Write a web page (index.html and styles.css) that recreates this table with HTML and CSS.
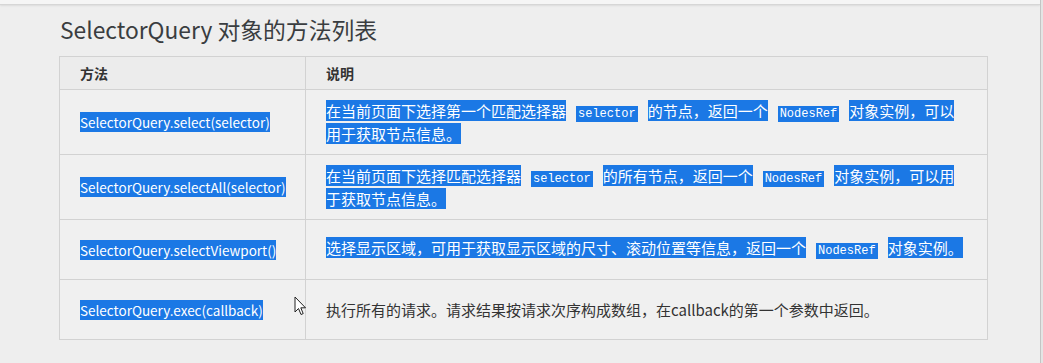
FILE: index.html
```
<!DOCTYPE html>
<html lang="zh-CN">
<head>
    <meta charset="UTF-8">
    <meta name="viewport" content="width=device-width, initial-scale=1.0">
    <title>SelectorQuery</title>
    <link rel="stylesheet" href="styles.css">
</head>
<body>

    <div class="window">
        <div class="content">
            <div class="topbar"></div>

            <div class="doc">
                <h2 class="title">SelectorQuery 对象的方法列表</h2>

                <table class="methods">
                    <thead>
                        <tr>
                            <th class="col-name">方法</th>
                            <th>说明</th>
                        </tr>
                    </thead>
                    <tbody>
                        <tr class="row-tall">
                            <td class="name"><span class="sel">SelectorQuery.select(selector)</span></td>
                            <td><span class="sel">在当前页面下选择第一个匹配选择器</span><code class="sel">selector</code><span class="sel">的节点，返回一个</span><code class="sel">NodesRef</code><span class="sel">对象实例，可以用于获取节点信息。</span></td>
                        </tr>
                        <tr class="row-tall">
                            <td class="name"><span class="sel">SelectorQuery.selectAll(selector)</span></td>
                            <td><span class="sel">在当前页面下选择匹配选择器</span><code class="sel">selector</code><span class="sel">的所有节点，返回一个</span><code class="sel">NodesRef</code><span class="sel">对象实例，可以用于获取节点信息。</span></td>
                        </tr>
                        <tr>
                            <td class="name"><span class="sel">SelectorQuery.selectViewport()</span></td>
                            <td><span class="sel">选择显示区域，可用于获取显示区域的尺寸、滚动位置等信息，返回一个</span><code class="sel">NodesRef</code><span class="sel">对象实例。</span></td>
                        </tr>
                        <tr>
                            <td class="name"><span class="sel">SelectorQuery.exec(callback)</span></td>
                            <td>执行所有的请求。请求结果按请求次序构成数组，在callback的第一个参数中返回。</td>
                        </tr>
                    </tbody>
                </table>
            </div>
        </div>
        <div class="scrollbar"></div>
    </div>

    <!-- mouse pointer -->
    <svg class="pointer" width="13" height="20" viewBox="0 0 13 20">
        <path d="M1 1 L1 16 L4.5 12.5 L7 18.5 L9.2 17.6 L6.8 11.8 L11.5 11.8 Z" fill="#fff" stroke="#222" stroke-width="1" stroke-linejoin="round"/>
    </svg>

</body>
</html>
```

FILE: styles.css
```
body {
    margin: 0;
    background-color: #eeeeee;
    font-family: "Noto Sans CJK SC", sans-serif;
    color: #333;
}

.window {
    display: flex;
    height: 363px;
}

.content {
    flex: 1;
}

.topbar {
    height: 4px;
    background-color: #f5f5f5;
    border-bottom: 1px solid #d6d6d6;
    box-shadow: 0 1px 2px rgba(0,0,0,0.08);
}

.scrollbar {
    width: 2px;
    border-left: 1px solid #c4c4c4;
    background-color: #e4e4e4;
}

.doc {
    padding-left: 59px;
}

.title {
    margin: 9px 0 10px 1px;
    font-size: 22.8px;
    font-weight: normal;
    line-height: 32px;
    color: #3a3d40;
}

.methods {
    border-collapse: collapse;
    table-layout: fixed;
    width: 929px;
    font-size: 15px;
    line-height: 20px;
    background-color: #f0f0f0;
}

.methods th,
.methods td {
    border: 1px solid #d2d2d2;
    padding: 0 20px;
    text-align: left;
    vertical-align: middle;
}

.methods th {
    height: 32px;
    font-size: 14px;
    font-weight: bold;
    color: #333;
    background-color: #ececec;
}

.methods .col-name {
    width: 205px;
}

.methods td {
    height: 59px;
}

.methods .row-tall td {
    height: 64px;
}

.methods td.name {
    font-size: 13.5px;
}

/* selected text */
.sel {
    background-color: #1b78e5;
    color: #fff;
}

code.sel {
    font-family: "Liberation Mono", monospace;
    font-size: 12px;
    margin: 0 10px;
    padding: 1px 2px;
}

.pointer {
    position: absolute;
    left: 294px;
    top: 296px;
}
```
